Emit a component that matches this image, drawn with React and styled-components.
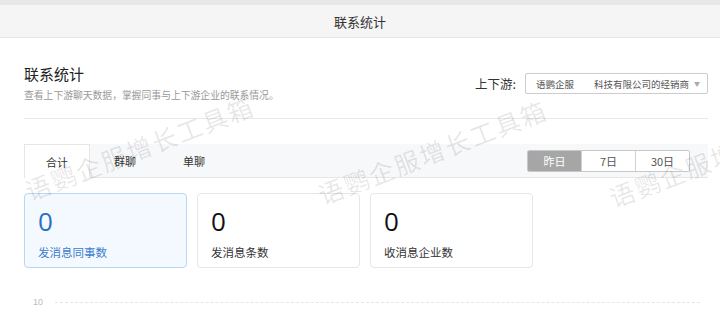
import React from "react";
import styled, { createGlobalStyle } from "styled-components";

const GlobalStyle = createGlobalStyle`
  html, body {
    margin: 0;
    padding: 0;
    background: #fff;
    font-family: "Noto Sans CJK SC", "Noto Sans", "Liberation Sans", sans-serif;
    color: #333;
  }
`;

const Screen = styled.div`
  position: relative;
  width: 720px;
  height: 312px;
  overflow: hidden;
  background: #fff;
  border-top: 5px solid #e6e7e9;
  box-sizing: border-box;
`;

const Header = styled.div`
  height: 32px;
  display: flex;
  align-items: center;
  justify-content: center;
  background: #f5f5f5;
  border-bottom: 1px solid #e6e6e6;
  font-size: 13px;
  color: #333;
`;

const Content = styled.div`
  padding: 0 12px 0 24px;
`;

const TitleRow = styled.div`
  display: flex;
  justify-content: space-between;
  align-items: flex-start;
  padding-top: 26px;
  padding-bottom: 16px;
  border-bottom: 1px solid #e8e8e8;
`;

const TitleBlock = styled.div`
  display: flex;
  flex-direction: column;
  gap: 4px;
`;

const Title = styled.h1`
  margin: 0;
  font-size: 15px;
  font-weight: 400;
  line-height: 20px;
  color: #222;
`;

const Subtitle = styled.p`
  margin: 0;
  font-size: 9.8px;
  line-height: 14px;
  color: #999;
`;

const Filter = styled.div`
  display: flex;
  align-items: center;
  gap: 9px;
  margin-top: 9px;
  font-size: 12.5px;
  color: #333;
  white-space: nowrap;
`;

const Select = styled.div`
  flex-shrink: 0;
  width: 183px;
  height: 21px;
  box-sizing: border-box;
  border: 1px solid #ccc;
  border-radius: 2px;
  display: flex;
  align-items: center;
  padding: 0 7px 0 10px;
  font-size: 9.5px;
  color: #555;
  white-space: nowrap;
`;

const SelectPart = styled.span`
  margin-right: ${(p) => p.$gap || 0}px;
`;

const Caret = styled.span`
  margin-left: auto;
  font-size: 6px;
  color: #aaa;
`;

const TabBar = styled.div`
  margin-top: 25px;
  height: 34px;
  display: flex;
  align-items: flex-end;
  justify-content: space-between;
  background: #f7f8fa;
  border-bottom: 1px solid #e6e6e6;
  box-sizing: border-box;
`;

const Tabs = styled.div`
  display: flex;
  height: 100%;
`;

const Tab = styled.div`
  width: ${(p) => (p.$active ? "66px" : "auto")};
  padding: ${(p) => (p.$active ? "0" : "0 22px 0 23px")};
  display: flex;
  align-items: center;
  justify-content: center;
  font-size: 11px;
  color: #333;
  box-sizing: border-box;
  background: ${(p) => (p.$active ? "#fff" : "transparent")};
  border: 1px solid ${(p) => (p.$active ? "#e6e6e6" : "transparent")};
  border-bottom: none;
  margin-bottom: ${(p) => (p.$active ? "-1px" : "0")};
  height: ${(p) => (p.$active ? "34px" : "33px")};
`;

const Range = styled.div`
  display: flex;
  align-self: center;
  margin-right: 18px;
  border: 1px solid #c8c8c8;
  border-radius: 2px;
  overflow: hidden;
`;

const RangeButton = styled.div`
  width: 53px;
  height: 20px;
  display: flex;
  align-items: center;
  justify-content: center;
  font-size: 11px;
  color: ${(p) => (p.$active ? "#fff" : "#555")};
  background: ${(p) => (p.$active ? "#a6a6a6" : "#fff")};
  & + & {
    border-left: 1px solid #d0d0d0;
  }
`;

const Cards = styled.div`
  display: flex;
  gap: 10px;
  margin-top: 15px;
`;

const Card = styled.div`
  width: 163px;
  height: 75px;
  box-sizing: border-box;
  border: 1px solid ${(p) => (p.$active ? "#b9d6f2" : "#e6e6e6")};
  background: ${(p) => (p.$active ? "#f4f9ff" : "#fff")};
  border-radius: 4px;
  padding: 14px 13px 0;
  display: flex;
  flex-direction: column;
`;

const Value = styled.div`
  font-family: "Open Sans", "Noto Sans", sans-serif;
  font-size: 26px;
  line-height: 26px;
  color: ${(p) => (p.$active ? "#2a70c2" : "#111")};
`;

const Label = styled.div`
  margin-top: 10px;
  font-size: 11.5px;
  color: ${(p) => (p.$active ? "#3d7fcc" : "#333")};
`;

const Chart = styled.div`
  margin-top: 29px;
  display: flex;
  align-items: center;
  gap: 12px;
  padding-left: 9px;
`;

const Tick = styled.span`
  font-family: "Liberation Sans", sans-serif;
  font-size: 9px;
  color: #bbb;
`;

const GridLine = styled.div`
  flex: 1;
  margin-right: 8px;
  border-top: 1px dashed #e6e6e6;
`;

const Watermark = styled.span`
  position: absolute;
  left: ${(p) => p.$x}px;
  top: ${(p) => p.$y}px;
  transform: rotate(-21deg);
  transform-origin: left center;
  font-size: 25px;
  letter-spacing: 2px;
  white-space: nowrap;
  color: rgba(0, 0, 0, 0.1);
  pointer-events: none;
`;

const cards = [
  { value: 0, label: "发消息同事数", active: true },
  { value: 0, label: "发消息条数" },
  { value: 0, label: "收消息企业数" },
];

const watermarks = [
  { x: 26, y: 168 },
  { x: 319, y: 172 },
  { x: 610, y: 175 },
];

export default function App() {
  return (
    <Screen>
      <GlobalStyle />
      <Header>联系统计</Header>
      <Content>
        <TitleRow>
          <TitleBlock>
            <Title>联系统计</Title>
            <Subtitle>查看上下游聊天数据，掌握同事与上下游企业的联系情况。</Subtitle>
          </TitleBlock>
          <Filter>
            上下游:
            <Select>
              <SelectPart $gap={20}>语鹦企服</SelectPart>
              <SelectPart>科技有限公司的经销商</SelectPart>
              <Caret>▼</Caret>
            </Select>
          </Filter>
        </TitleRow>
        <TabBar>
          <Tabs>
            <Tab $active>合计</Tab>
            <Tab>群聊</Tab>
            <Tab>单聊</Tab>
          </Tabs>
          <Range>
            <RangeButton $active>昨日</RangeButton>
            <RangeButton>7日</RangeButton>
            <RangeButton>30日</RangeButton>
          </Range>
        </TabBar>
        <Cards>
          {cards.map((c) => (
            <Card key={c.label} $active={c.active}>
              <Value $active={c.active}>{c.value}</Value>
              <Label $active={c.active}>{c.label}</Label>
            </Card>
          ))}
        </Cards>
        <Chart>
          <Tick>10</Tick>
          <GridLine />
        </Chart>
      </Content>
      {watermarks.map((w) => (
        <Watermark key={w.x} $x={w.x} $y={w.y}>
          语鹦企服增长工具箱
        </Watermark>
      ))}
    </Screen>
  );
}
